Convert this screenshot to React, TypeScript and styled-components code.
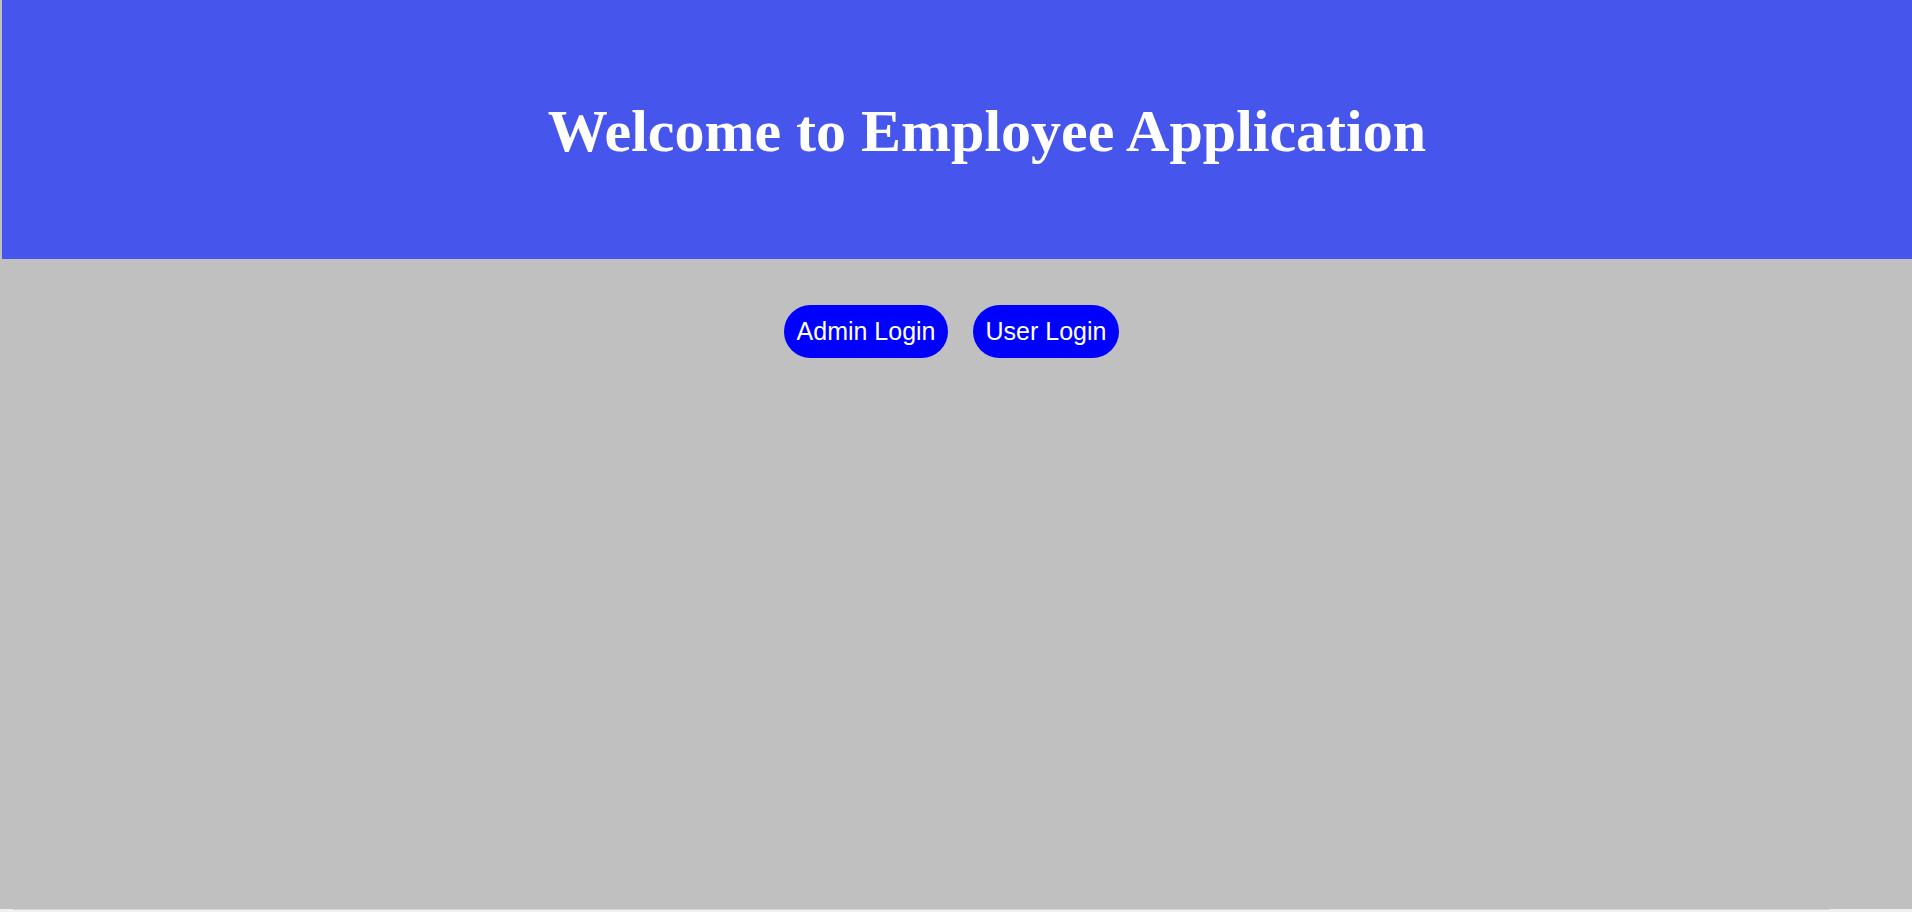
import React from "react";
import styled, { createGlobalStyle } from "styled-components";

const GlobalStyle = createGlobalStyle`
    html, body {
        margin: 0;
        padding: 0;
        overflow: hidden;
        background: #c0c0c0;
    }
`;

const Page = styled.div`
    display: flex;
    flex-direction: column;
    min-height: 100vh;
    background: #c0c0c0;
`;

const Header = styled.header`
    box-sizing: border-box;
    width: 1970px;
    height: 259px;
    margin-left: 2px;
    padding-top: 97px;
    background: #4656ec;
    text-align: center;
`;

const Title = styled.h1`
    margin: 0;
    font-family: "Liberation Serif", "Times New Roman", serif;
    font-size: 60px;
    font-weight: bold;
    line-height: 68px;
    color: #ffffff;
`;

const Main = styled.main`
    flex: 1;
    display: flex;
    justify-content: center;
    align-items: flex-start;
    gap: 25px;
    padding: 46px 9px 0 0;
`;

const LoginButton = styled.button`
    padding: 12px 12.5px;
    border: none;
    border-radius: 27px;
    background: #0000ff;
    color: #ffffff;
    font-family: "Liberation Sans", Arial, sans-serif;
    font-size: 25px;
    line-height: normal;
    cursor: pointer;
`;

const ScrollTrack = styled.div`
    height: 3px;
    padding: 0 82px 0 13px;
    background: #f1f1f1;
`;

const ScrollThumb = styled.div`
    height: 1px;
    background: #d4d4d4;
`;

const App = () => {
    return (
        <>
            <GlobalStyle />
            <Page>
                <Header>
                    <Title>Welcome to Employee Application</Title>
                </Header>

                <Main>
                    <LoginButton>Admin Login</LoginButton>
                    <LoginButton>User Login</LoginButton>
                </Main>

                <ScrollTrack>
                    <ScrollThumb />
                </ScrollTrack>
            </Page>
        </>
    );
};

export default App;
